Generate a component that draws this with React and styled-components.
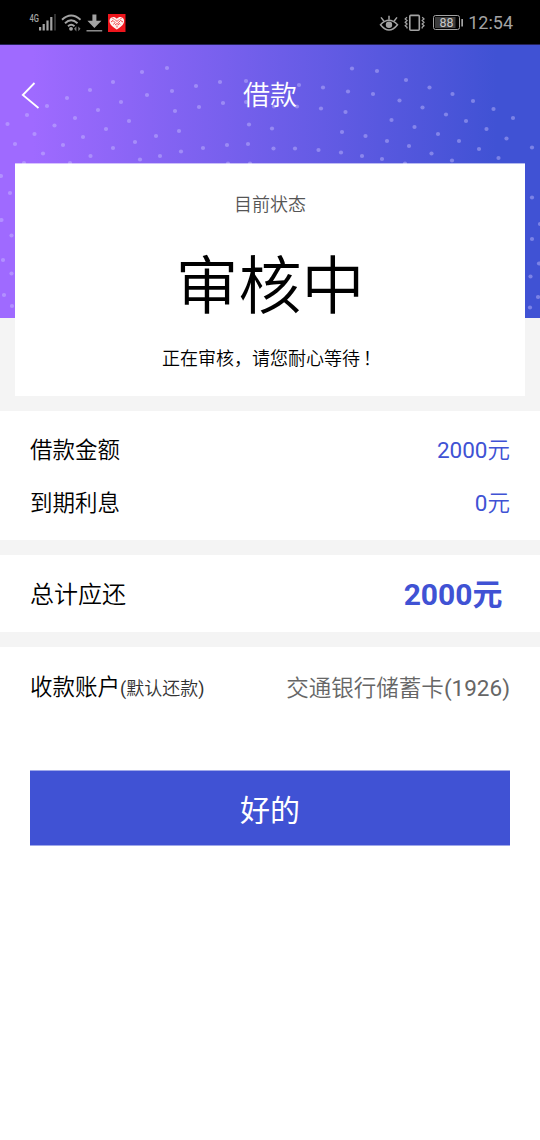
import React from 'react';
import styled, { createGlobalStyle } from 'styled-components';

// dot positions inside the purple banner
const dots = [
  [142, 27], [167, 23], [113, 37], [90, 45], [67, 53], [47, 61], [27, 70],
  [7.5, 79], [147, 50], [172, 46], [196, 41], [220, 37], [246, 36], [121, 57],
  [98, 65], [75, 73], [54.5, 80.5], [34.5, 89], [15, 99], [175, 66], [199, 62],
  [223, 58], [246, 57], [129, 76], [106, 84], [83, 92], [63, 100], [43, 108.5],
  [179, 86], [156, 91], [135, 97], [113, 103], [90.5, 111], [70, 118],
  [249, 79.5], [248, 99], [227, 100], [203, 103], [181, 106.5], [160, 111],
  [140, 114.5], [24, 118], [228, 118.5], [250, 118.5],
  [352, 23.5], [377, 26], [406, 35], [429.5, 42.5], [452.5, 49], [473, 56],
  [493.5, 64], [513, 73], [299, 40], [323, 42.5], [348, 46.5], [373, 49],
  [399.5, 55.5], [422.5, 62.5], [446, 69.5], [466, 76], [486.5, 84],
  [506.5, 93.5], [532, 102.5], [274, 61.5], [297, 61.5], [321, 63.5],
  [345.5, 67], [391.5, 75], [414.5, 82], [438, 89], [459, 96], [479, 104],
  [498.5, 113], [272, 83.5], [342, 87], [365.5, 91], [387, 96], [409, 101],
  [431.5, 108.5], [452, 115.5], [273.5, 103.5], [295, 103.5], [318.5, 105],
  [341, 107.5], [362, 111], [382, 114], [405, 118.5],
  [1, 131], [10, 148], [1.5, 175], [11.5, 190.5], [3, 215], [11.5, 228.5],
  [4, 250], [12, 261], [532, 152.5], [540, 179], [532, 194], [539, 218.5],
  [530.5, 231.5], [538, 252], [530, 262.5],
];

const StatusIconsLeft = () => (
  <svg width='100' height='22' viewBox='28 11 100 22' fill='none'>
    <text x='29.5' y='21.5' fill='#a3a3a3' fontSize='10' fontWeight='500' textLength='9.5' lengthAdjust='spacingAndGlyphs'>
      4G
    </text>
    <g fill='#a3a3a3'>
      <rect x='39' y='27' width='2.2' height='3.5' />
      <rect x='42.6' y='24' width='2.2' height='6.5' />
      <rect x='46.4' y='20.5' width='2.2' height='10' />
      <rect x='50.2' y='17' width='2.2' height='13.5' />
      <rect x='54' y='14' width='2' height='16.5' fill='#303030' />
      <circle cx='71' cy='28.8' r='1.9' />
    </g>
    <g stroke='#a3a3a3' strokeWidth='1.9'>
      <path d='M62 19.7Q71 11.3 80.5 19.7' />
      <path d='M65 23.2Q71 17.5 77.5 23.2' />
      <path d='M68 26.3Q71.2 23.3 74.5 26.3' />
    </g>
    <path d='M74 28.8l2.4-2.6v5.2zM80.5 28.8l-2.2-2.4v4.8z' fill='#777' />
    <path d='M92.4 14.5h4v6.2h5L94.4 27.9 87.4 20.7h5z' fill='#a3a3a3' />
    <path d='M86.5 30.8h15.7' stroke='#a3a3a3' strokeWidth='1.3' />
    <rect x='108' y='14' width='17.5' height='18' fill='#ee151c' />
    <path
      d='M116.8 29.6C112.5 26.6 109.5 24.6 109.5 20.7c0-4.2 5-5 7.3-2 2.3-3 7.3-2.2 7.3 2 0 3.9-3 5.9-7.3 8.9z'
      fill='#fff1ee'
    />
    <path
      d='M112 17.5l2 2M115 19.5l2 2 2-2M111 22l2-1.5 2 2-1.5 2M122 17.5l-2 2M123 22l-2.5-1.5-2 2 1.5 2M115 25l2-1.5 2 1.5M117 25.5v2'
      stroke='#ee151c'
      strokeWidth='.8'
    />
  </svg>
);

const StatusIconsRight = () => (
  <svg width='86' height='22' viewBox='379 11 86 22' fill='none'>
    <g stroke='#a3a3a3' strokeWidth='1.5'>
      <path d='M380.5 24.7Q389 16 397.5 24.7Q389 35.5 380.5 24.7z' />
      <path d='M389 19.7v-4M384 21.2l-3-3.8M394 21.2l3-3.8' />
      <rect x='409.8' y='15.4' width='9.5' height='14.8' rx='1' strokeWidth='1.6' />
      <path d='M407 17.2l-1.8 1.7 1.8 1.7-1.8 1.7 1.8 1.7-1.8 1.7 1.8 1.7v1' strokeWidth='1.3' />
      <path d='M422.2 17.2l1.8 1.7-1.8 1.7 1.8 1.7-1.8 1.7 1.8 1.7-1.8 1.7v1' strokeWidth='1.3' />
      <rect x='433.5' y='15.5' width='26' height='14' rx='2' strokeWidth='1' />
    </g>
    <circle cx='389' cy='24.8' r='3.2' fill='#a3a3a3' />
    <rect x='435' y='17' width='20.5' height='11' fill='#3c3c3c' />
    <rect x='461.3' y='19' width='1.7' height='7.5' fill='#a3a3a3' />
    <text x='439.5' y='27.4' fill='#c8c8c8' fontSize='13.5' fontWeight='400' textLength='14' lengthAdjust='spacingAndGlyphs'>
      88
    </text>
  </svg>
);

const App = () => {
  return (
    <>
      <GlobalStyle />
      <StatusBar>
        <StatusIconsLeft />
        <StatusRight>
          <StatusIconsRight />
          <Clock>12:54</Clock>
        </StatusRight>
      </StatusBar>
      <Banner>
        <Dots width='540' height='273' viewBox='0 0 540 273'>
          {dots.map(([x, y]) => (
            <circle key={`${x}-${y}`} cx={x} cy={y} r='2.1' fill='#cdc6ff' fillOpacity='.42' />
          ))}
        </Dots>
        <NavBar>
          <BackButton aria-label='返回'>
            <svg width='20' height='28' viewBox='0 0 20 28' fill='none'>
              <path d='M13.5 1L1.8 13 17.5 26' stroke='#fff' strokeWidth='1.8' />
            </svg>
          </BackButton>
          <PageTitle>借款</PageTitle>
        </NavBar>
        <StatusCard>
          <StatusLabel>目前状态</StatusLabel>
          <StatusValue>审核中</StatusValue>
          <StatusHint>
            正在审核，请您耐心等待<Mark>！</Mark>
          </StatusHint>
        </StatusCard>
      </Banner>
      <Section $height={129} $padding='12px 30px 11px'>
        <Row>
          <Label>借款金额</Label>
          <Value>
            <Digits>2000</Digits>元
          </Value>
        </Row>
        <Row>
          <Label>到期利息</Label>
          <Value>
            <Digits>0</Digits>元
          </Value>
        </Row>
      </Section>
      <Divider />
      <Section $height={77} $padding='3px 30px 0'>
        <Row>
          <Label $size={24}>总计应还</Label>
          <Total>2000元</Total>
        </Row>
      </Section>
      <Divider />
      <Section $height={123} $padding='0 30px 42px'>
        <Row>
          <Label>
            收款账户
            <Note>
              <Digits>(</Digits>默认还款<Digits>)</Digits>
            </Note>
          </Label>
          <Value $muted>
            交通银行储蓄卡<Digits>(1926)</Digits>
          </Value>
        </Row>
      </Section>
      <ConfirmButton>好的</ConfirmButton>
    </>
  );
};

export default App;

const GlobalStyle = createGlobalStyle`
  * {
    box-sizing: border-box;
  }
  body {
    margin: 0;
    min-height: 100vh;
    background: #fff;
    color: #000;
    font-family: Roboto, 'Noto Sans CJK SC', sans-serif;
    font-weight: 350;
  }
  h1, h2, p {
    margin: 0;
    font-weight: inherit;
  }
`;

const StatusBar = styled.div`
  display: flex;
  justify-content: space-between;
  align-items: center;
  height: 45px;
  padding: 0 27px 0 28px;
  background: #000;
  border-bottom: 1px solid #25225a;
`;

const StatusRight = styled.div`
  display: flex;
  align-items: center;
  gap: 3px;
`;

const Clock = styled.span`
  padding-top: 2px;
  color: #a3a3a3;
  font-size: 18px;
  font-weight: 400;
  line-height: 22px;
`;

const Banner = styled.header`
  position: relative;
  height: 366px;
  padding: 0 15px 15px;
  background: linear-gradient(90deg, #9f6aff 0, #9f6aff 6%, #4052d4 92%) 0 0 / 100%
    273px no-repeat #f4f4f4;
`;

const Dots = styled.svg`
  position: absolute;
  top: 0;
  left: 0;
`;

const NavBar = styled.nav`
  position: relative;
  display: grid;
  grid-template-columns: 40px 1fr 40px;
  align-items: center;
  height: 118px;
  padding-bottom: 17px;
`;

const BackButton = styled.button`
  display: flex;
  padding: 0 0 0 6px;
  border: none;
  background: transparent;
`;

const PageTitle = styled.h1`
  padding-top: 1px;
  color: #fff;
  font-size: 27px;
  line-height: 40px;
  text-align: center;
`;

const StatusCard = styled.div`
  position: relative;
  display: flex;
  flex-direction: column;
  align-items: center;
  height: 233px;
  padding-top: 27px;
  border-top: 1px solid rgba(255, 255, 255, 0.6);
  background: #fff;
  background-clip: padding-box;
`;

const StatusLabel = styled.p`
  color: #555;
  font-size: 18px;
  line-height: 27px;
`;

const StatusValue = styled.h2`
  margin-top: 22px;
  font-size: 63px;
  line-height: 94px;
`;

const StatusHint = styled.p`
  margin-top: 11px;
  font-size: 18px;
  line-height: 27px;
  white-space: nowrap;
`;

const Mark = styled.span`
  margin: 0 -3px 0 3px;
`;

const Section = styled.section`
  display: flex;
  flex-direction: column;
  height: ${({ $height }) => $height}px;
  padding: ${({ $padding }) => $padding};
  background: #fff;
`;

const Divider = styled.div`
  height: 15px;
  background: #f4f4f4;
`;

const Row = styled.div`
  display: flex;
  flex: 1;
  justify-content: space-between;
  align-items: center;
`;

const Label = styled.span`
  font-size: ${({ $size }) => $size || 22.5}px;
  line-height: 34px;
`;

const Digits = styled.span`
  font-weight: 400;
`;

const Note = styled.span`
  color: #333;
  font-size: 18px;
`;

const Value = styled.span`
  color: ${({ $muted }) => ($muted ? '#666' : '#4052d4')};
  font-size: 22.5px;
  line-height: 34px;
`;

const Total = styled.strong`
  padding-right: 7.5px;
  color: #4052d4;
  font-size: 30px;
  font-weight: 700;
  line-height: 44px;
`;

const ConfirmButton = styled.button`
  display: block;
  width: 480px;
  height: 76px;
  margin: 0 auto;
  padding: 0;
  border: solid rgba(64, 82, 212, 0.5);
  border-width: 1px 0;
  background: #4052d4;
  background-clip: padding-box;
  color: #fff;
  font-family: inherit;
  font-size: 30px;
  font-weight: 400;
`;
